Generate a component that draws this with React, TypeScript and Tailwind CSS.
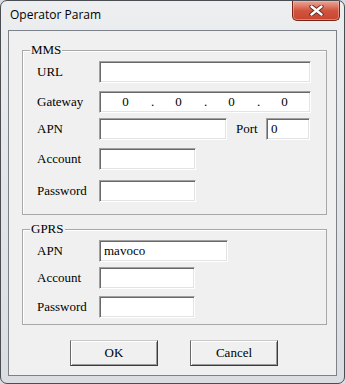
import React from "react";

const serif = "font-['Liberation_Serif','Times_New_Roman',serif] text-[13px] text-black";
const field =
  "h-[22px] bg-white border border-t-[#a0a0a0] border-l-[#a0a0a0] border-r-white border-b-white shadow-[inset_1px_1px_0_#696969,inset_-1px_-1px_0_#e3e3e3] flex items-center";

function Row({ label, children, className }: { label: string; children: React.ReactNode; className: string }) {
  return (
    <div className={`flex items-center pl-[14px] ${className}`}>
      <div className={`w-[62px] ${serif}`}>{label}</div>
      {children}
    </div>
  );
}

function Group({ title, children, className }: { title: string; children: React.ReactNode; className: string }) {
  return (
    <div className={`relative ml-[13px] w-[305px] border border-[#a8a8a8] shadow-[inset_1px_1px_0_#ffffff] ${className}`}>
      <div className={`absolute -top-[9px] left-[7px] px-[1px] bg-[#f0f0f0] leading-[16px] ${serif}`}>{title}</div>
      {children}
    </div>
  );
}

function Button({ label }: { label: string }) {
  return (
    <div
      className={`w-[88px] h-[26px] flex items-center justify-center bg-[#f0f0f0] border border-t-[#c8c8c8] border-l-[#6a6a6a] border-r-[#3c3c3c] border-b-[#3c3c3c] shadow-[inset_1px_1px_0_#ffffff,inset_-1px_-1px_0_#9a9a9a] ${serif}`}
    >
      {label}
    </div>
  );
}

export default function App() {
  return (
    <div className="w-[345px] h-[384px] bg-[#d9dde1]">
      <div className="w-[345px] h-[384px] rounded-[7px] border border-[#4a4d52] bg-gradient-to-b from-[#eceef0] via-[#e3e6e9] to-[#dadee2] flex flex-col">
        <div className="h-[29px] flex items-start">
          <div className="mt-[6px] pl-[9px] font-['Open_Sans',sans-serif] text-[12px] leading-[16px] text-black">
            Operator Param
          </div>
          <div className="ml-auto mr-[4px] w-[48px] h-[20px] rounded-b-[5px] border border-t-0 border-[#7a2416] bg-gradient-to-b from-[#e9a596] via-[#d2553f] to-[#c8452e] shadow-[inset_0_0_0_1px_rgba(255,200,190,0.45)] flex items-center justify-center">
            <svg width="15" height="11" viewBox="0 0 15 11">
              <path d="M2.5 1.5 L12.5 9.5 M12.5 1.5 L2.5 9.5" stroke="#5a2a22" strokeWidth="4.2" strokeLinecap="round" />
              <path d="M2.5 1.5 L12.5 9.5 M12.5 1.5 L2.5 9.5" stroke="#ffffff" strokeWidth="2.4" strokeLinecap="round" />
            </svg>
          </div>
        </div>
        <div className="ml-[7px] w-[329px] h-[346px] border border-[#7d8288] bg-[#f0f0f0] flex flex-col">
          <Group title="MMS" className="mt-[19px] pt-[10px] pb-[12px]">
            <Row label="URL" className="">
              <div className={`${field} w-[212px]`} />
            </Row>
            <Row label="Gateway" className="mt-[8px]">
              <div className={`${field} w-[212px] ${serif}`}>
                <div className="flex-1 text-center">0</div>
                <div className="w-[2px] text-center">.</div>
                <div className="flex-1 text-center">0</div>
                <div className="w-[2px] text-center">.</div>
                <div className="flex-1 text-center">0</div>
                <div className="w-[2px] text-center">.</div>
                <div className="flex-1 text-center">0</div>
              </div>
            </Row>
            <Row label="APN" className="mt-[5px]">
              <div className={`${field} w-[128px]`} />
              <div className={`ml-[9px] w-[30px] ${serif}`}>Port</div>
              <div className={`${field} w-[44px] pl-[4px] ${serif}`}>0</div>
            </Row>
            <Row label="Account" className="mt-[8px]">
              <div className={`${field} w-[97px]`} />
            </Row>
            <Row label="Password" className="mt-[10px]">
              <div className={`${field} w-[97px]`} />
            </Row>
          </Group>
          <Group title="GPRS" className="mt-[14px] pt-[10px] pb-[6px]">
            <Row label="APN" className="">
              <div className={`${field} w-[129px] pl-[4px] ${serif}`}>mavoco</div>
            </Row>
            <Row label="Account" className="mt-[5px]">
              <div className={`${field} w-[96px]`} />
            </Row>
            <Row label="Password" className="mt-[7px]">
              <div className={`${field} w-[96px]`} />
            </Row>
          </Group>
          <div className="mt-[15px] ml-[61px] flex gap-[32px]">
            <Button label="OK" />
            <Button label="Cancel" />
          </div>
        </div>
      </div>
    </div>
  );
}
